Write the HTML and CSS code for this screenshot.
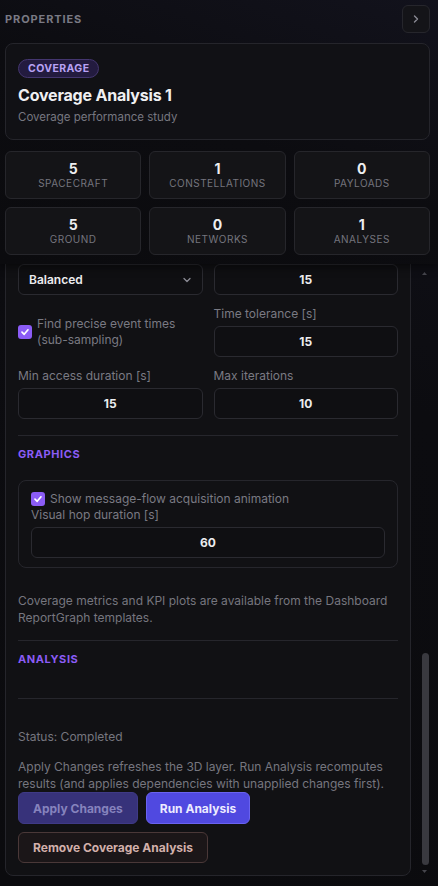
FILE: index.html
```html
<!DOCTYPE html>
<html lang="en">

<head>
    <meta charset="UTF-8">
    <meta name="viewport" content="width=device-width, initial-scale=1.0">
    <title>Properties</title>
    <link rel="stylesheet" href="styles.css">
</head>

<body>
    <div class="sidebar">
        <header class="props-head">
            <div class="head-row">
                <span class="head-title">PROPERTIES</span>
                <button class="collapse-btn" aria-label="Collapse">
                    <svg width="10" height="10" viewBox="0 0 10 10"><path d="M3.5 2 L6.5 5 L3.5 8" fill="none" stroke="#8a8a94" stroke-width="1.4" stroke-linecap="round" stroke-linejoin="round"/></svg>
                </button>
            </div>

            <div class="entity-card">
                <span class="badge">COVERAGE</span>
                <h2>Coverage Analysis 1</h2>
                <p>Coverage performance study</p>
            </div>

            <div class="stats">
                <div class="stat"><b>5</b><span>SPACECRAFT</span></div>
                <div class="stat"><b>1</b><span>CONSTELLATIONS</span></div>
                <div class="stat"><b>0</b><span>PAYLOADS</span></div>
                <div class="stat"><b>5</b><span>GROUND</span></div>
                <div class="stat"><b>0</b><span>NETWORKS</span></div>
                <div class="stat"><b>1</b><span>ANALYSES</span></div>
            </div>
        </header>

        <div class="scroll-area">
            <div class="scroll-view">
                <div class="panel">
                    <!-- upper part of the form, scrolled out of view -->
                    <div class="section-title">GENERAL</div>
                    <div class="grid1">
                        <div class="field">
                            <label>Name</label>
                            <div class="input left">Coverage Analysis 1</div>
                        </div>
                        <div class="field">
                            <label>Description</label>
                            <div class="input left">Coverage performance study</div>
                        </div>
                    </div>

                    <hr class="divider">
                    <div class="section-title">TARGETS</div>
                    <div class="grid2">
                        <div class="field"><label>Target set</label><div class="input left">Ground stations</div></div>
                        <div class="field"><label>Assets</label><div class="input left">Constellation 1</div></div>
                        <div class="field"><label>Min elevation [deg]</label><div class="input">10</div></div>
                        <div class="field"><label>Grid resolution [deg]</label><div class="input">5</div></div>
                        <div class="field"><label>Lat min [deg]</label><div class="input">-90</div></div>
                        <div class="field"><label>Lat max [deg]</label><div class="input">90</div></div>
                    </div>

                    <hr class="divider">
                    <div class="section-title">TIME WINDOW</div>
                    <div class="grid2">
                        <div class="field"><label>Start time</label><div class="input">00:00:00</div></div>
                        <div class="field"><label>Stop time</label><div class="input">24:00:00</div></div>
                        <div class="field"><label>Duration [h]</label><div class="input">24</div></div>
                        <div class="field"><label>Output step [s]</label><div class="input">60</div></div>
                    </div>

                    <hr class="divider">
                    <div class="section-title">COMPUTATION</div>
                    <div class="grid2">
                        <div class="field">
                            <label>Access mode</label>
                            <div class="select">
                                <span>Balanced</span>
                                <svg width="10" height="10" viewBox="0 0 10 10"><path d="M2 3.5 L5 6.5 L8 3.5" fill="none" stroke="#8a8a94" stroke-width="1.3" stroke-linecap="round" stroke-linejoin="round"/></svg>
                            </div>
                        </div>
                        <div class="field">
                            <label>Time step [s]</label>
                            <div class="input">15</div>
                        </div>
                        <div class="check-field">
                            <span class="check">
                                <svg width="10" height="10" viewBox="0 0 10 10"><path d="M2 5.2 L4.2 7.3 L8 2.8" fill="none" stroke="#fff" stroke-width="1.7" stroke-linecap="round" stroke-linejoin="round"/></svg>
                            </span>
                            <span class="check-text">Find precise event times (sub-sampling)</span>
                        </div>
                        <div class="field">
                            <label>Time tolerance [s]</label>
                            <div class="input">15</div>
                        </div>
                        <div class="field">
                            <label>Min access duration [s]</label>
                            <div class="input">15</div>
                        </div>
                        <div class="field">
                            <label>Max iterations</label>
                            <div class="input">10</div>
                        </div>
                    </div>

                    <hr class="divider">
                    <div class="section-title">GRAPHICS</div>

                    <div class="sub-box">
                        <div class="check-row">
                            <span class="check">
                                <svg width="10" height="10" viewBox="0 0 10 10"><path d="M2 5.2 L4.2 7.3 L8 2.8" fill="none" stroke="#fff" stroke-width="1.7" stroke-linecap="round" stroke-linejoin="round"/></svg>
                            </span>
                            <span class="check-text">Show message-flow acquisition animation</span>
                        </div>
                        <label>Visual hop duration [s]</label>
                        <div class="input">60</div>
                    </div>

                    <p class="note">Coverage metrics and KPI plots are available from the Dashboard ReportGraph templates.</p>

                    <hr class="divider">
                    <div class="section-title">ANALYSIS</div>
                    <hr class="divider analysis-div">

                    <p class="status">Status: Completed</p>
                    <p class="note tight">Apply Changes refreshes the 3D layer. Run Analysis recomputes results (and applies dependencies with unapplied changes first).</p>

                    <div class="actions">
                        <button class="btn btn-apply">Apply Changes</button>
                        <button class="btn btn-run">Run Analysis</button>
                    </div>
                    <button class="btn btn-remove">Remove Coverage Analysis</button>
                </div>
            </div>

            <div class="scrollbar">
                <svg class="arrow" width="11" height="14" viewBox="0 0 11 14"><path d="M3 9 L5.5 6 L8 9 Z" fill="#45454c"/></svg>
                <div class="thumb"></div>
                <svg class="arrow" width="11" height="14" viewBox="0 0 11 14"><path d="M3 5 L5.5 8 L8 5 Z" fill="#45454c"/></svg>
            </div>
        </div>
    </div>
</body>

</html>
```

FILE: styles.css
```css
* {
    box-sizing: border-box;
}

html,
body {
    height: 100%;
}

body {
    margin: 0;
    font-family: Inter, "Noto Sans", sans-serif;
    background: linear-gradient(200deg, #12121c 0%, #0c0c10 40%, #0b0b0e 100%);
    color: #e6e6ea;
    overflow: hidden;
}

.sidebar {
    height: 100%;
    display: flex;
    flex-direction: column;
}

.props-head {
    flex: none;
    padding: 5px 8px 9px 5px;
    box-shadow: 0 4px 8px rgba(0, 0, 0, 0.45);
    position: relative;
    z-index: 1;
    background: linear-gradient(200deg, #12121c 0%, #0c0c10 50%, #0b0b0e 100%);
}

.head-row {
    display: flex;
    align-items: center;
    justify-content: space-between;
    height: 28px;
}

.head-title {
    font-size: 11px;
    font-weight: 700;
    letter-spacing: 0.9px;
    color: #7a7a84;
}

.collapse-btn {
    width: 28px;
    height: 28px;
    border-radius: 6px;
    border: 1px solid #26262c;
    background: #141418;
    display: flex;
    align-items: center;
    justify-content: center;
    padding: 0;
}

.entity-card {
    margin-top: 10px;
    border: 1px solid #25252b;
    border-radius: 8px;
    background: #111115;
    padding: 12px 12px 15px;
}

.badge {
    display: inline-block;
    height: 19px;
    line-height: 17px;
    padding: 0 9px;
    border-radius: 10px;
    border: 1px solid #44366f;
    background: #231b3f;
    color: #b8a2f4;
    font-size: 10.5px;
    font-weight: 700;
    letter-spacing: 0.4px;
}

.entity-card h2 {
    margin: 7px 0 0;
    font-size: 16px;
    font-weight: 700;
    letter-spacing: -0.2px;
    color: #f0f0f2;
}

.entity-card p {
    margin: 5px 0 0;
    font-size: 11.5px;
    color: #777780;
}

.stats {
    margin-top: 11px;
    display: grid;
    grid-template-columns: repeat(3, 1fr);
    gap: 8px;
}

.stat {
    height: 48px;
    border: 1px solid #26262b;
    border-radius: 6px;
    background: #141417;
    display: flex;
    flex-direction: column;
    align-items: center;
    justify-content: center;
}

.stat b {
    font-size: 14px;
    line-height: 17px;
    color: #eeeef0;
}

.stat span {
    font-size: 10px;
    line-height: 13px;
    letter-spacing: 0.5px;
    color: #75757e;
}

/* scrolled panel, shown at its bottom */
.scroll-area {
    flex: 1;
    min-height: 0;
    display: flex;
    margin: 0 8px 0 5px;
}

.scroll-view {
    flex: 1;
    min-width: 0;
    overflow: hidden;
    display: flex;
    flex-direction: column;
    justify-content: flex-end;
    padding: 0 8px 10px 0;
}

.scrollbar {
    flex: none;
    width: 11px;
    display: flex;
    flex-direction: column;
    padding: 2px 0 7px;
}

.scrollbar .arrow {
    display: block;
    flex: none;
}

.thumb {
    margin-top: auto;
    margin-left: 3px;
    width: 7px;
    height: 212px;
    border-radius: 4px;
    background: #39393f;
}

.panel {
    flex: none;
    border: 1px solid #25252b;
    border-radius: 8px;
    background: #111114;
    padding: 14px 12px 12px;
}

.section-title {
    font-size: 11px;
    font-weight: 700;
    letter-spacing: 0.6px;
    color: #8b5cf6;
}

.grid1,
.grid2 {
    margin-top: 12px;
    display: grid;
    grid-template-columns: 1fr;
    row-gap: 11px;
}

.grid2 {
    grid-template-columns: 1fr 1fr;
    column-gap: 11px;
}

.field {
    display: flex;
    flex-direction: column;
}

label {
    display: block;
    font-size: 12px;
    line-height: 16px;
    color: #7a7a83;
    margin-bottom: 4px;
}

.input,
.select {
    height: 31px;
    border: 1px solid #2a2a30;
    border-radius: 6px;
    background: #0f0f12;
    font-size: 12px;
    font-weight: 700;
    color: #ececef;
    display: flex;
    align-items: center;
    justify-content: center;
}

.input.left {
    justify-content: flex-start;
    padding: 0 10px;
    font-weight: 500;
}

.select {
    justify-content: space-between;
    padding: 0 10px;
    font-weight: 600;
}

.check-field {
    display: flex;
    align-items: center;
    align-self: center;
    gap: 5px;
}

.check {
    flex: none;
    width: 14px;
    height: 14px;
    border-radius: 3px;
    background: #8b5cf6;
    display: flex;
    align-items: center;
    justify-content: center;
}

.check-text {
    font-size: 12px;
    line-height: 16px;
    color: #7a7a83;
}

.divider {
    border: none;
    border-top: 1px solid #26262c;
    margin: 16px 0 11px;
}

.note + .divider {
    margin-top: 14px;
}

.sub-box {
    margin-top: 19px;
    border: 1px solid #26262c;
    border-radius: 8px;
    padding: 10px 12px 9px;
}

.check-row {
    display: flex;
    align-items: center;
    gap: 5px;
}

.note {
    margin: 24px 0 0;
    font-size: 12px;
    line-height: 17px;
    color: #76767f;
}

.analysis-div {
    margin-top: 32px;
}

.status {
    margin: 30px 0 0;
    font-size: 12px;
    line-height: 16px;
    color: #76767f;
}

.note.tight {
    margin-top: 13px;
}

.actions {
    display: flex;
    gap: 8px;
}

.btn {
    height: 32px;
    padding: 0 14px;
    border-radius: 6px;
    font-family: Inter, sans-serif;
    font-size: 12px;
    font-weight: 700;
    cursor: pointer;
}

.btn-apply {
    background: #37327a;
    border: 1px solid #3f3a86;
    color: #8683bd;
}

.btn-run {
    padding: 0 13px;
    background: #5049e0;
    border: 1px solid #6a63f0;
    color: #ecebff;
}

.btn-remove {
    align-self: flex-start;
    margin-top: 8px;
    height: 31px;
    background: #1b1618;
    border: 1px solid #4a3838;
    color: #d2b0ab;
}
```
